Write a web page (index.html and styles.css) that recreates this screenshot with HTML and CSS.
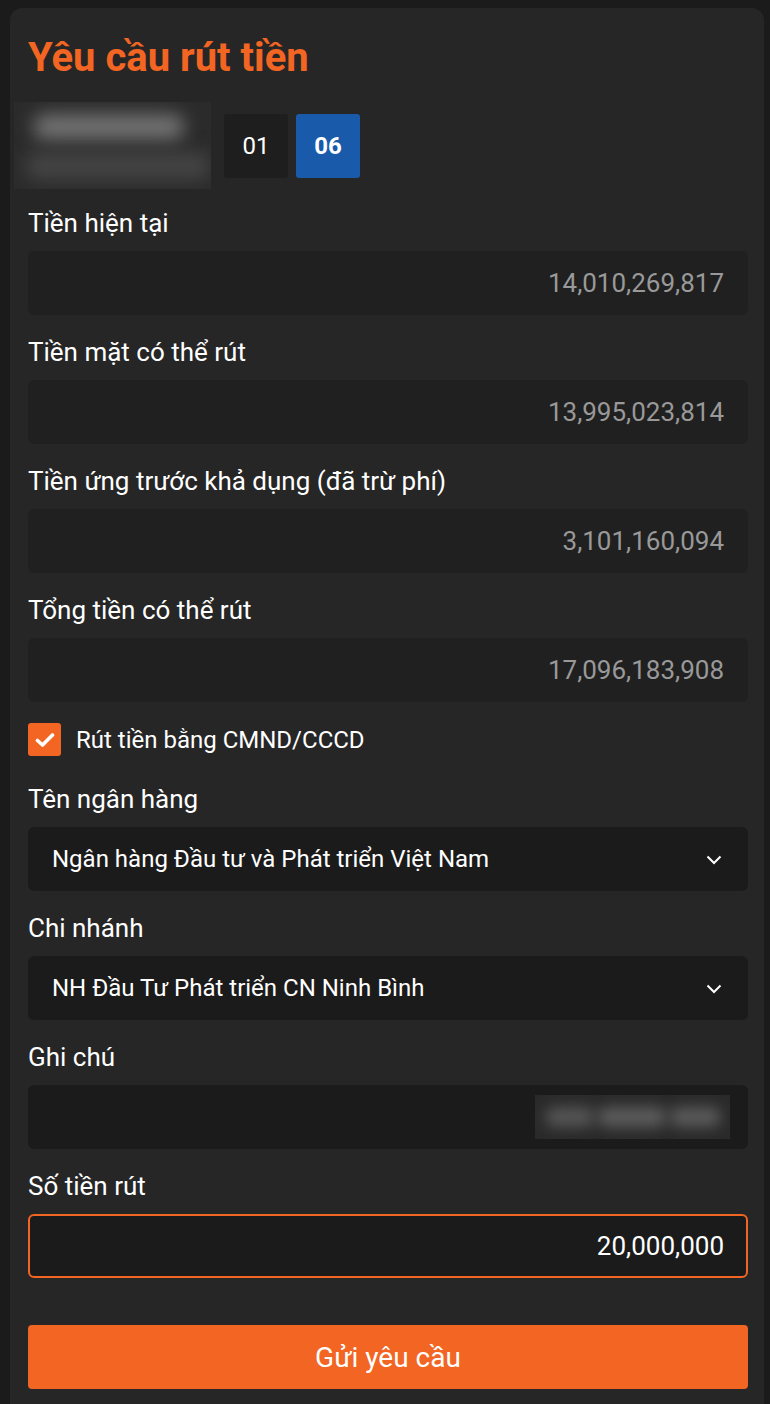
FILE: index.html
```html
<!DOCTYPE html>
<html lang="vi">
<head>
    <meta charset="UTF-8">
    <meta name="viewport" content="width=device-width, initial-scale=1.0">
    <title>Yêu cầu rút tiền</title>
    <link rel="stylesheet" href="styles.css">
</head>
<body>
    <div class="card">
        <h1 class="title">Yêu cầu rút tiền</h1>

        <div class="account-row">
            <div class="account-blur">
                <div class="blur-line blur-top"></div>
                <div class="blur-line blur-bottom"></div>
            </div>
            <div class="sub-tab">01</div>
            <div class="sub-tab active">06</div>
        </div>

        <div class="field">
            <label class="field-label">Tiền hiện tại</label>
            <div class="field-box readonly">14,010,269,817</div>
        </div>
        <div class="field">
            <label class="field-label">Tiền mặt có thể rút</label>
            <div class="field-box readonly">13,995,023,814</div>
        </div>
        <div class="field">
            <label class="field-label">Tiền ứng trước khả dụng (đã trừ phí)</label>
            <div class="field-box readonly">3,101,160,094</div>
        </div>
        <div class="field">
            <label class="field-label">Tổng tiền có thể rút</label>
            <div class="field-box readonly">17,096,183,908</div>
        </div>

        <div class="check-row">
            <span class="checkbox">
                <svg width="20" height="16" viewBox="0 0 20 16">
                    <path d="M2.5 8.5 L7.5 13 L17.5 3" fill="none" stroke="#fff" stroke-width="3.6" stroke-linecap="round" stroke-linejoin="round"/>
                </svg>
            </span>
            <span class="check-label">Rút tiền bằng CMND/CCCD</span>
        </div>

        <div class="field">
            <label class="field-label">Tên ngân hàng</label>
            <div class="field-box select">
                <span>Ngân hàng Đầu tư và Phát triển Việt Nam</span>
                <svg class="chevron" width="16" height="10" viewBox="0 0 16 10">
                    <path d="M1.5 1.5 L8 8 L14.5 1.5" fill="none" stroke="#fff" stroke-width="2"/>
                </svg>
            </div>
        </div>
        <div class="field">
            <label class="field-label">Chi nhánh</label>
            <div class="field-box select">
                <span>NH Đầu Tư Phát triển CN Ninh Bình</span>
                <svg class="chevron" width="16" height="10" viewBox="0 0 16 10">
                    <path d="M1.5 1.5 L8 8 L14.5 1.5" fill="none" stroke="#fff" stroke-width="2"/>
                </svg>
            </div>
        </div>
        <div class="field">
            <label class="field-label">Ghi chú</label>
            <div class="field-box note">
                <div class="note-blur">
                    <div class="blur-line note-a"></div>
                    <div class="blur-line note-b"></div>
                    <div class="blur-line note-c"></div>
                </div>
            </div>
        </div>
        <div class="field">
            <label class="field-label">Số tiền rút</label>
            <div class="field-box amount">20,000,000</div>
        </div>

        <button class="submit-btn">Gửi yêu cầu</button>
    </div>
</body>
</html>
```

FILE: styles.css
```css
body {
    margin: 0;
    background-color: #1b1b1b;
    font-family: Roboto, "Noto Sans", sans-serif;
    color: #fff;
}

.card {
    margin: 8px 6px 0 10px;
    padding: 26px 16px 20px 18px;
    background-color: #262626;
    border-radius: 12px 12px 0 0;
}

.title {
    margin: 0;
    font-size: 40px;
    line-height: 48px;
    font-weight: 700;
    color: #f26522;
}

.account-row {
    display: flex;
    align-items: center;
    margin: 20px 0 18px -14px;
}

.account-blur {
    position: relative;
    width: 197px;
    height: 87px;
    margin-right: 13px;
    background-color: #2b2b2b;
    overflow: hidden;
}

.blur-line {
    position: absolute;
    border-radius: 10px;
    filter: blur(9px);
}

.blur-top {
    left: 20px;
    top: 12px;
    width: 150px;
    height: 26px;
    background-color: #727272;
}

.blur-bottom {
    left: 12px;
    top: 50px;
    width: 184px;
    height: 28px;
    background-color: #444;
}

.sub-tab {
    width: 64px;
    height: 64px;
    margin-right: 8px;
    border-radius: 3px;
    background-color: #1e1e1e;
    display: flex;
    align-items: center;
    justify-content: center;
    font-size: 24px;
}

.sub-tab.active {
    background-color: #1a5aab;
    font-weight: 700;
}

.field {
    margin-bottom: 21px;
}

.field-label {
    display: block;
    margin-bottom: 12px;
    font-size: 26px;
    line-height: 32px;
}

.field-box {
    height: 64px;
    box-sizing: border-box;
    padding: 0 24px;
    border-radius: 6px;
    background-color: #1b1b1b;
    display: flex;
    align-items: center;
    font-size: 26px;
}

.field-box.readonly {
    justify-content: flex-end;
    background-color: #202020;
    color: #999;
}

.field-box.select {
    justify-content: space-between;
    font-size: 24px;
    padding-right: 26px;
}

.chevron {
    margin-top: 2px;
}

.field-box.note {
    justify-content: flex-end;
    padding-right: 18px;
}

.note-blur {
    position: relative;
    width: 195px;
    height: 44px;
    background-color: #2a2a2a;
    overflow: hidden;
}

.note-a,
.note-b,
.note-c {
    top: 12px;
    height: 20px;
    filter: blur(7px);
}

.note-a {
    left: 10px;
    width: 50px;
    background-color: #555;
}

.note-b {
    left: 62px;
    width: 70px;
    background-color: #5c5c5c;
}

.note-c {
    left: 134px;
    width: 52px;
    background-color: #5a5a5a;
}

.field-box.amount {
    justify-content: flex-end;
    border: 2px solid #f26522;
    padding-right: 22px;
}

.check-row {
    display: flex;
    align-items: center;
    gap: 15px;
    margin-bottom: 27px;
}

.checkbox {
    width: 33px;
    height: 33px;
    border-radius: 3px;
    background-color: #f26522;
    display: flex;
    align-items: center;
    justify-content: center;
}

.check-label {
    font-size: 24px;
    line-height: 32px;
}

.submit-btn {
    display: block;
    width: 100%;
    height: 64px;
    margin-top: 47px;
    border: none;
    border-radius: 4px;
    background-color: #f26522;
    color: #fff;
    font-family: Roboto, sans-serif;
    font-size: 28px;
    cursor: pointer;
}
```
